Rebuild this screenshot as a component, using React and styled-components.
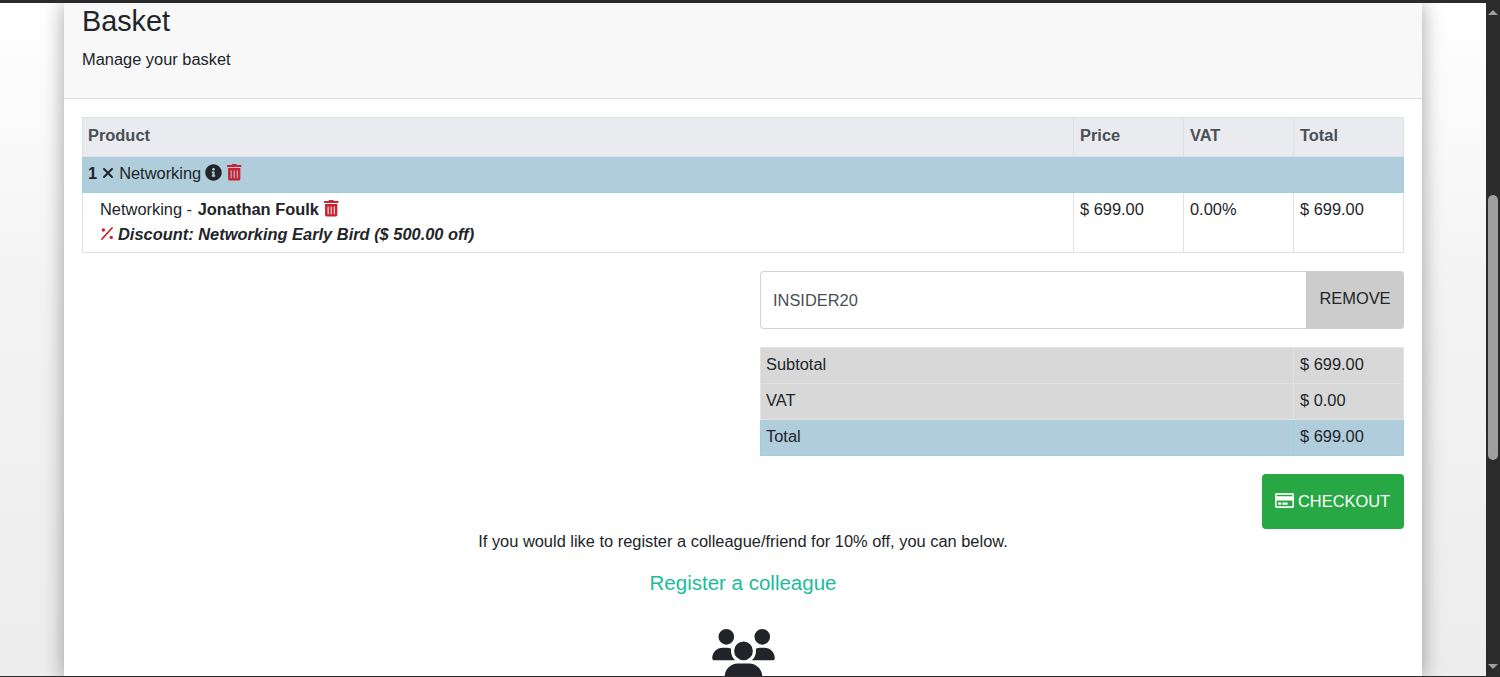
import React from "react";
import styled, { createGlobalStyle } from "styled-components";
import { FaTrashAlt, FaInfoCircle, FaRegCreditCard } from "react-icons/fa";
import { FaUsers, FaXmark } from "react-icons/fa6";

const Global = createGlobalStyle`
  html, body { margin: 0; height: 100%; overflow: hidden; }
  body { font-family: "Liberation Sans", Arial, sans-serif; font-size: 16.42px; line-height: 24px; color: #212529; }
  #root { height: 100%; }
  * { box-sizing: border-box; }
`;

const Frame = styled.div`
  height: 677px;
  display: flex;
  flex-direction: column;
  background: #2b2b2b;
  padding: 3px 0 1px;
`;
const Viewport = styled.div`
  flex: 1;
  min-height: 0;
  display: flex;
`;
const Page = styled.main`
  flex: 1;
  min-width: 0;
  overflow: hidden;
  padding: 0 64px;
  background: linear-gradient(#ffffff 0, #f3f3f3 300px, #ededed 100%);
`;
const Card = styled.section`
  background: #fff;
  min-height: 100%;
  box-shadow: 0 0 20px rgba(0, 0, 0, 0.36);
`;
const CardHeader = styled.header`
  height: 96px;
  padding: 2px 18px 0;
  background: #f8f8f8;
  border-bottom: 1px solid #dcdcdc;
`;
const Title = styled.h3`
  margin: 0 0 9px;
  font-size: 28.8px;
  font-weight: 400;
  line-height: 33px;
`;
const Subtitle = styled.p`
  margin: 0;
`;
const CardBody = styled.div`
  padding: 18px 18px 0;
`;
const Table = styled.table`
  width: 100%;
  table-layout: fixed;
  border-collapse: collapse;
`;
const HeadCell = styled.th`
  height: 39px;
  padding: 0 6px 4px;
  background: #e9ebef;
  border: 1px solid #dee2e6;
  color: #495057;
  font-weight: 700;
  text-align: left;
  &:first-child { padding-left: 5px; }
`;
const GroupCell = styled.td`
  height: 36px;
  padding: 0 5px 4px;
  background: #b0cddc;
  border: 1px solid #9fd0e0;
`;
const Cell = styled.td`
  padding: 4px 6px;
  vertical-align: top;
  border: 1px solid #dee2e6;
  height: 60px;
`;
const ProductCell = styled(Cell)`
  padding: 3px 6px 3px 17px;
`;
const Line = styled.div`
  display: flex;
  align-items: center;
  gap: 4px;
  height: 25px;
  white-space: pre;
`;
const Discount = styled(Line)`
  font-weight: 700;
  font-style: italic;
`;
const Person = styled.b`
  margin-left: 1px;
`;
const Trash = styled(FaTrashAlt)`
  color: #c82333;
  flex: none;
`;
const InfoIcon = styled(FaInfoCircle)`
  font-size: 17px;
  flex: none;
`;
const TimesIcon = styled(FaXmark)`
  font-size: 16px;
  flex: none;
  margin: 0 -1px;
`;
const PercentGlyph = styled.svg`
  width: 14px;
  height: 13px;
  flex: none;
  color: #c82333;
`;
const Side = styled.div`
  margin-left: auto;
  width: 644px;
`;
const CouponGroup = styled.div`
  display: flex;
  height: 58px;
  margin: 18px 0;
`;
const CouponInput = styled.input`
  flex: 1;
  min-width: 0;
  padding: 0 12px;
  font: inherit;
  color: #495057;
  background: #fff;
  border: 1px solid #ced4da;
  border-right: 0;
  border-radius: 4px 0 0 4px;
  outline: 0;
`;
const RemoveButton = styled.button`
  width: 98px;
  padding: 0 0 5px;
  font: inherit;
  color: #212529;
  background: #ccc;
  border: 0;
  border-radius: 0 4px 4px 0;
`;
const SummaryCell = styled.td`
  height: 36px;
  padding: 0 6px 4px;
  background: ${(p) => (p.$total ? "#b0cddc" : "#d8d8d8")};
  border: 1px solid ${(p) => (p.$total ? "#9fd0e0" : "#e2e2e2")};
  &:first-child { padding-left: 5px; }
`;
const CheckoutRow = styled.div`
  display: flex;
  justify-content: flex-end;
  margin-top: 18px;
`;
const CheckoutButton = styled.button`
  display: flex;
  align-items: center;
  gap: 4px;
  width: 142px;
  height: 55px;
  padding: 0 0 2px 13px;
  font: inherit;
  color: #fff;
  background: #28a745;
  border: 0;
  border-radius: 4px;
`;
const Center = styled.div`
  text-align: center;
`;
const Invite = styled.p`
  margin: 0 0 15px;
`;
const Colleague = styled.a`
  display: block;
  font-size: 20.5px;
  line-height: 30px;
  color: #1abc9c;
  text-decoration: none;
`;
const GroupIcon = styled(FaUsers)`
  display: block;
  margin: 31px auto 0;
  width: 63px;
  height: 50px;
  color: #212529;
`;
const Scrollbar = styled.aside`
  width: 14px;
  flex: none;
  background: #2b2b2b;
  display: flex;
  flex-direction: column;
  align-items: center;
`;
const ArrowUp = styled.span`
  margin-top: 7px;
  border-left: 5px solid transparent;
  border-right: 5px solid transparent;
  border-bottom: 5px solid #9f9f9f;
`;
const Thumb = styled.span`
  margin-top: 180px;
  width: 10px;
  height: 265px;
  border-radius: 5px;
  background: #9f9f9f;
`;
const ArrowDown = styled.span`
  margin-top: auto;
  margin-bottom: 7px;
  border-left: 5px solid transparent;
  border-right: 5px solid transparent;
  border-top: 5px solid #9f9f9f;
`;

const PercentIcon = () => (
  <PercentGlyph viewBox="0 0 14 13" aria-hidden="true">
    <path d="M2 12 L12 1" stroke="currentColor" strokeWidth="1.8" strokeLinecap="round" fill="none" />
    <circle cx="3.4" cy="3" r="1.7" fill="currentColor" />
    <circle cx="11.2" cy="10.4" r="1.7" fill="currentColor" />
  </PercentGlyph>
);

export default function App() {
  return (
    <>
      <Global />
      <Frame>
        <Viewport>
          <Page>
            <Card>
              <CardHeader>
                <Title>Basket</Title>
                <Subtitle>Manage your basket</Subtitle>
              </CardHeader>
              <CardBody>
                <Table>
                  <colgroup>
                    <col />
                    <col width="110" />
                    <col width="110" />
                    <col width="110" />
                  </colgroup>
                  <thead>
                    <tr>
                      <HeadCell>Product</HeadCell>
                      <HeadCell>Price</HeadCell>
                      <HeadCell>VAT</HeadCell>
                      <HeadCell>Total</HeadCell>
                    </tr>
                  </thead>
                  <tbody>
                    <tr>
                      <GroupCell colSpan={4}>
                        <Line>
                          <b>1</b>
                          <TimesIcon />
                          <span>Networking</span>
                          <InfoIcon />
                          <Trash />
                        </Line>
                      </GroupCell>
                    </tr>
                    <tr>
                      <ProductCell>
                        <Line>
                          <span>
                            Networking - <Person>Jonathan Foulk</Person>
                          </span>
                          <Trash />
                        </Line>
                        <Discount>
                          <PercentIcon />
                          <span>Discount: Networking Early Bird ($ 500.00 off)</span>
                        </Discount>
                      </ProductCell>
                      <Cell>$ 699.00</Cell>
                      <Cell>0.00%</Cell>
                      <Cell>$ 699.00</Cell>
                    </tr>
                  </tbody>
                </Table>
                <Side>
                  <CouponGroup>
                    <CouponInput defaultValue="INSIDER20" />
                    <RemoveButton>REMOVE</RemoveButton>
                  </CouponGroup>
                  <Table>
                    <colgroup>
                      <col />
                      <col width="110" />
                    </colgroup>
                    <tbody>
                      <tr>
                        <SummaryCell>Subtotal</SummaryCell>
                        <SummaryCell>$ 699.00</SummaryCell>
                      </tr>
                      <tr>
                        <SummaryCell>VAT</SummaryCell>
                        <SummaryCell>$ 0.00</SummaryCell>
                      </tr>
                      <tr>
                        <SummaryCell $total>Total</SummaryCell>
                        <SummaryCell $total>$ 699.00</SummaryCell>
                      </tr>
                    </tbody>
                  </Table>
                  <CheckoutRow>
                    <CheckoutButton>
                      <FaRegCreditCard size={19} />
                      CHECKOUT
                    </CheckoutButton>
                  </CheckoutRow>
                </Side>
                <Center>
                  <Invite>If you would like to register a colleague/friend for 10% off, you can below.</Invite>
                  <Colleague href="#">Register a colleague</Colleague>
                  <GroupIcon />
                </Center>
              </CardBody>
            </Card>
          </Page>
          <Scrollbar>
            <ArrowUp />
            <Thumb />
            <ArrowDown />
          </Scrollbar>
        </Viewport>
      </Frame>
    </>
  );
}
